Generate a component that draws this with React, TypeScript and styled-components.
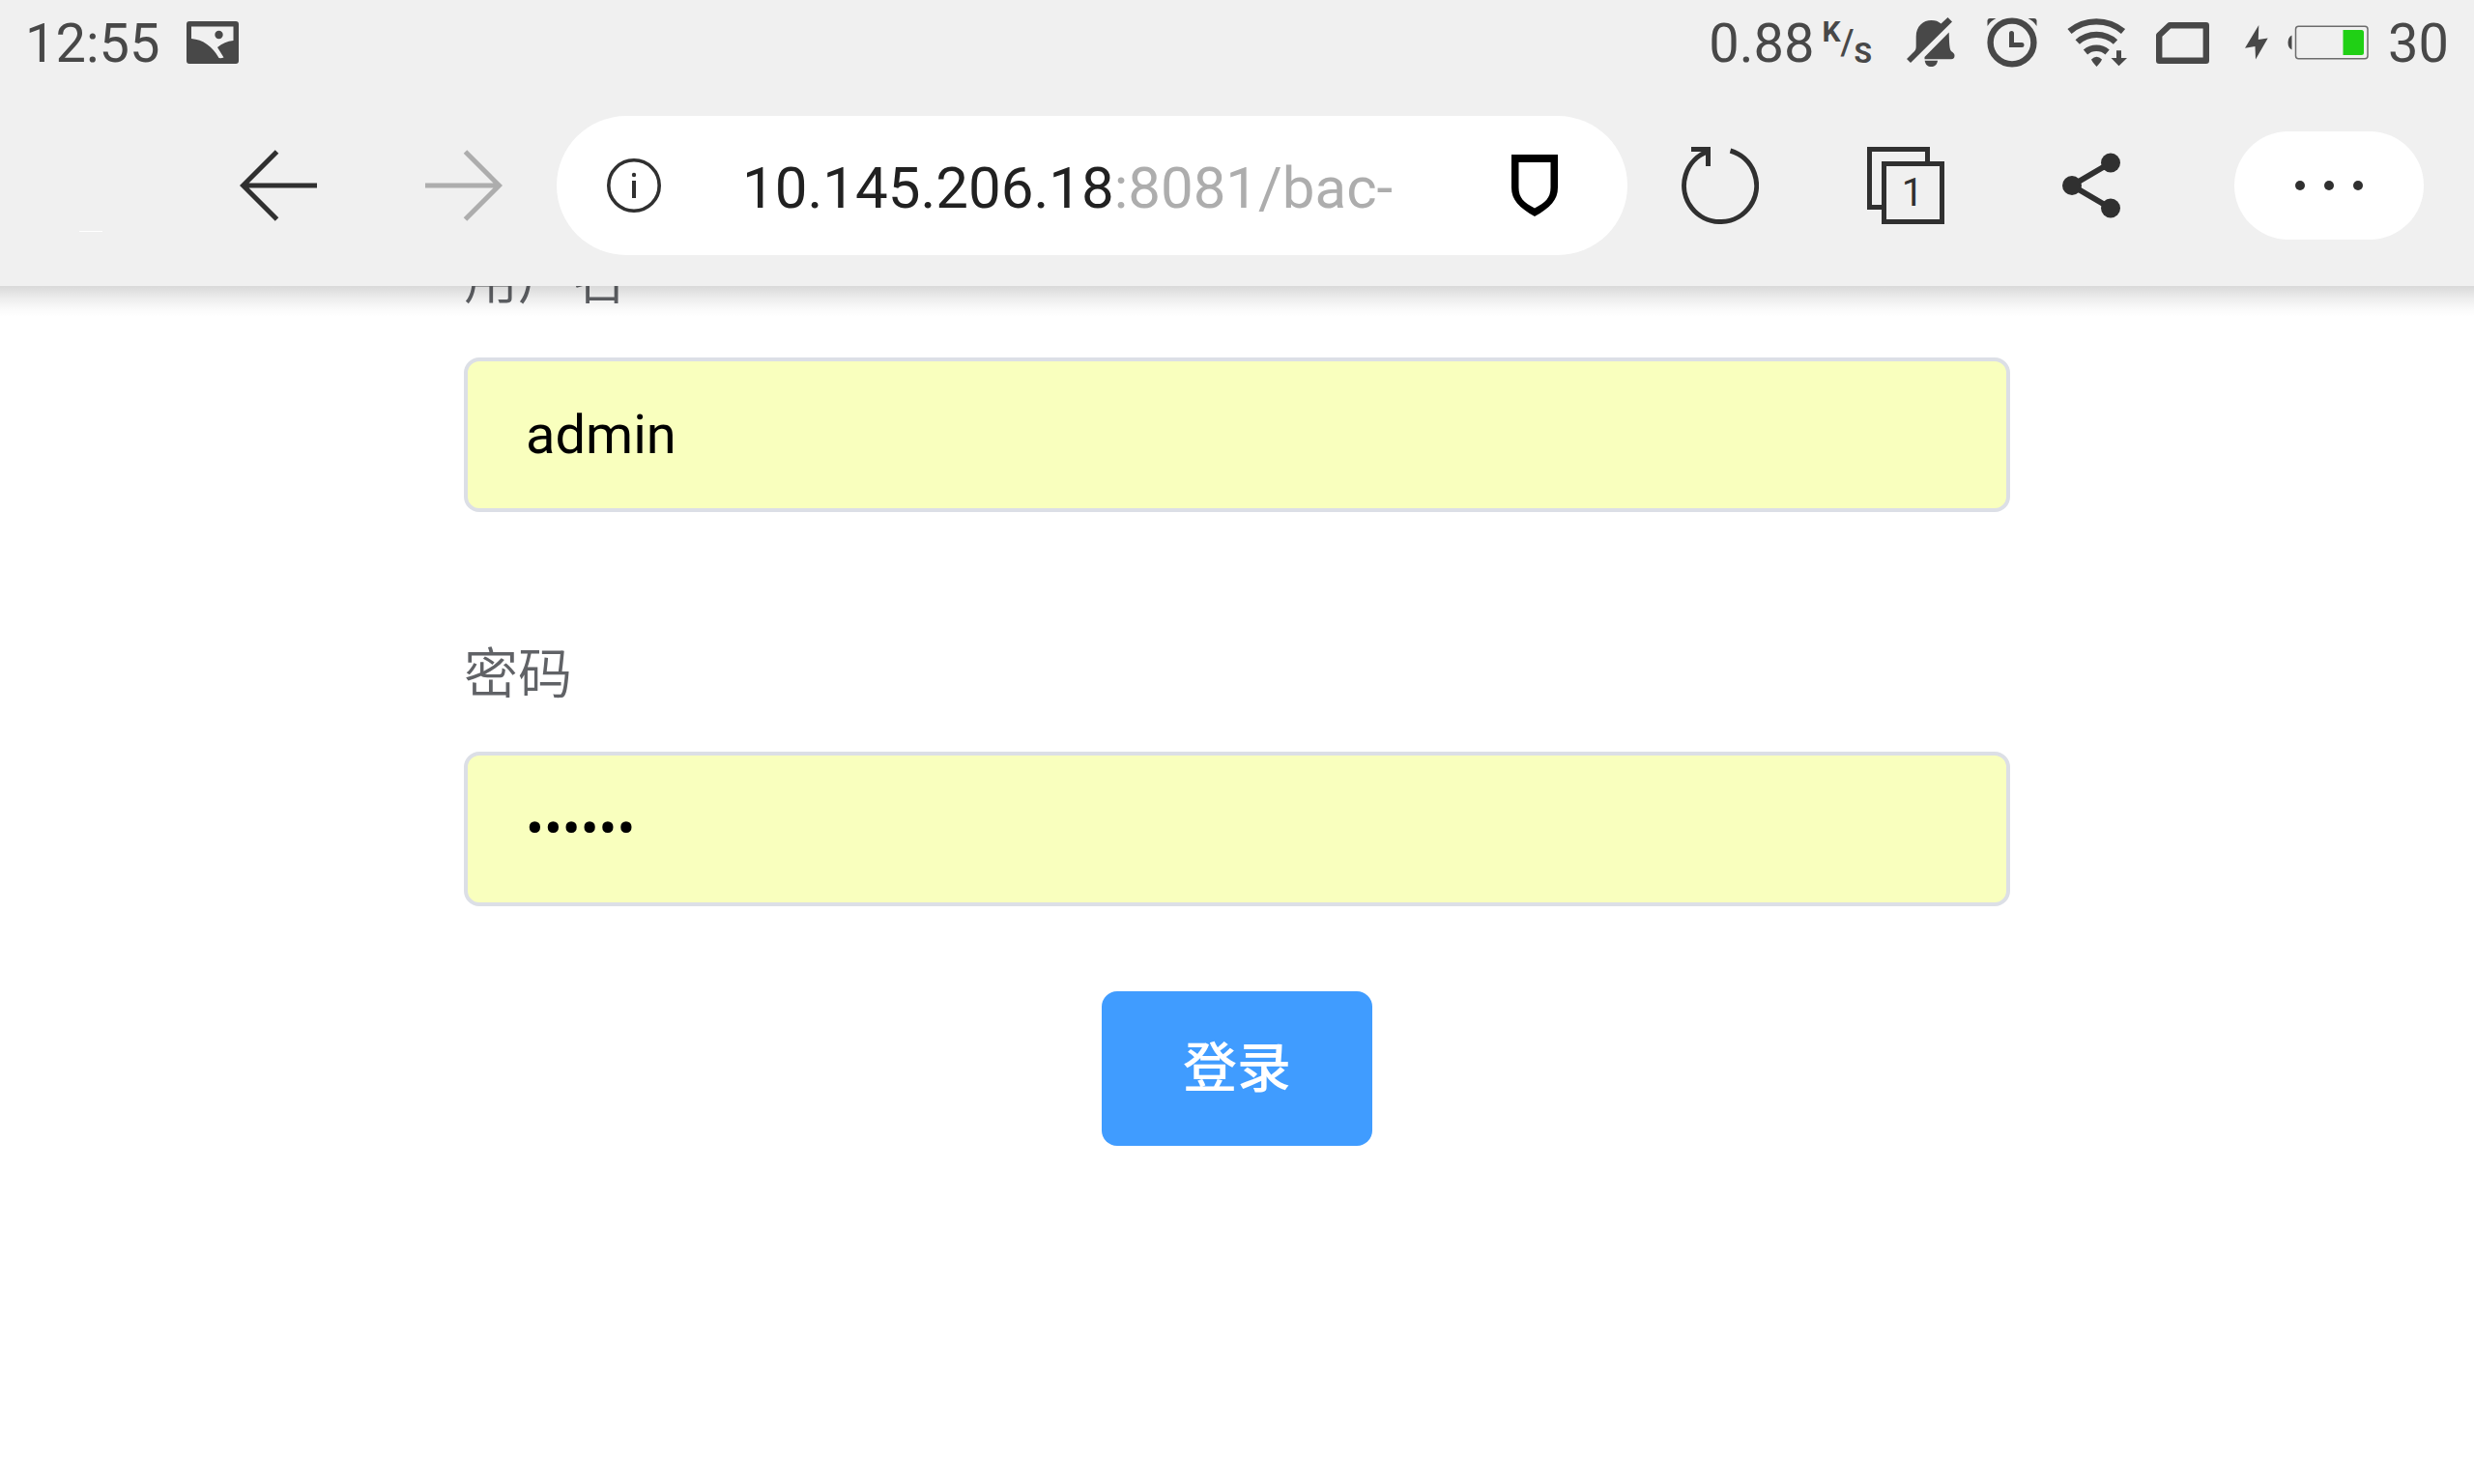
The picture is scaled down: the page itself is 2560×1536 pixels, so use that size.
import React from "react";
import styled, { createGlobalStyle } from "styled-components";

const GlobalStyle = createGlobalStyle`
  *, *::before, *::after { box-sizing: border-box; }
  body {
    margin: 0;
    background: #ffffff;
    font-family: Roboto, "Noto Sans CJK SC", sans-serif;
    font-size: 56px;
  }
  button, input { font: inherit; }
`;

const Header = styled.header`
  position: sticky;
  top: 0;
  z-index: 1;
  background: #f0f0f0;

  &::after {
    content: "";
    position: absolute;
    top: 100%;
    left: 0;
    right: 0;
    height: 32px;
    pointer-events: none;
    background: linear-gradient(
      rgba(0, 0, 0, 0.15),
      rgba(0, 0, 0, 0.07) 40%,
      rgba(0, 0, 0, 0.02) 75%,
      transparent
    );
  }
`;

const StatusBar = styled.div`
  display: flex;
  align-items: center;
  justify-content: space-between;
  height: 88px;
  padding: 0 26px;
  color: #484848;
  line-height: 64px;
`;

const StatusGroup = styled.div<{ $gap: number }>`
  display: flex;
  align-items: center;
  gap: ${(p) => p.$gap}px;
`;

const StatusText = styled.span`
  padding-top: 2px;
`;

const Rate = styled.span`
  display: flex;
  height: 50px;
  font-size: 30px;
  font-weight: 700;
  line-height: 28px;
`;

const RateSlash = styled.span`
  align-self: center;
  font-size: 36px;
  font-weight: 500;
`;

const RateUnit = styled.span`
  align-self: flex-end;
`;

const Toolbar = styled.nav`
  display: flex;
  align-items: center;
  height: 208px;
`;

const ToolSlot = styled.div`
  flex: none;
  display: flex;
  width: 192px;
`;

const ToolButton = styled.button<{ $muted?: boolean }>`
  flex: none;
  display: flex;
  align-items: center;
  justify-content: center;
  width: 192px;
  height: 144px;
  padding: 0;
  border: 0;
  background: none;
  color: ${(p) => (p.$muted ? "#adadad" : "#303030")};
`;

const AddressBar = styled.div`
  flex: 1;
  min-width: 0;
  display: flex;
  align-items: center;
  height: 144px;
  border-radius: 72px;
  background: #ffffff;
`;

const InfoButton = styled(ToolButton)`
  width: 160px;
`;

const Address = styled.button`
  flex: 1;
  min-width: 0;
  height: 144px;
  padding: 4px 0 0 32px;
  border: 0;
  overflow: hidden;
  background: none;
  color: #212121;
  font-size: 60px;
  text-align: left;
  white-space: nowrap;
`;

const AddressRest = styled.span`
  color: #adadad;
`;

const MoreButton = styled(ToolButton)`
  width: 196px;
  height: 112px;
  margin: 0 52px;
  border-radius: 56px;
  background: #ffffff;
`;

const LoginForm = styled.form`
  display: flex;
  flex-direction: column;
  gap: 88px;
  margin: -86px 480px 0;
`;

const Field = styled.div`
  display: flex;
  flex-direction: column;
`;

const FieldLabel = styled.label`
  color: #606266;
  line-height: 160px;
  font-weight: 350;
`;

const FieldInput = styled.input`
  width: 100%;
  height: 160px;
  padding: 0 60px;
  border: 4px solid #dcdfe6;
  border-radius: 16px;
  outline: 0;
  background: #f9ffbe;
  color: #000000;
`;

const SubmitButton = styled.button`
  align-self: center;
  padding: 0 84px;
  border: 0;
  border-radius: 16px;
  background: #409cff;
  color: #ffffff;
  font-weight: 500;
  line-height: 160px;
`;

const ImageIcon = () => (
  <svg width="54" height="44" viewBox="0 0 54 44" fill="currentColor" aria-hidden="true">
    <path
      fillRule="evenodd"
      d="M3 0H51Q54 0 54 3V41Q54 44 51 44H3Q0 44 0 41V3Q0 0 3 0ZM5 5.5V18C17 19 27 26 33.5 38Q36 38.500 38.500 37.500L32 27C37 23 42 20.500 48.500 20V5.500Z"
    />
    <circle cx="33.500" cy="14" r="4.200" />
  </svg>
);

const MutedBellIcon = () => (
  <svg width="60" height="52" viewBox="-8 0 60 52" fill="currentColor" aria-hidden="true">
    <path d="M0 43L6 37C9 34.500 9.700 33 9.700 30V20C9.700 9 17 3 25.500 3C30 3 32.500 4 35.500 6.500L42.500 0L47 4.500L4 47Z" />
    <path d="M43.700 15.500C44 24 44 29 45 33C45.500 36 49.500 36 49.500 39.500Q49.500 43.300 46 43.300H18.500V41Z" />
    <path d="M18.700 44.700H32C31.500 49 28.500 51 25.300 51C22 51 19.200 49 18.700 44.700Z" />
  </svg>
);

const AlarmIcon = () => (
  <svg width="56" height="54" viewBox="-3 0 56 54" fill="none" stroke="currentColor" aria-hidden="true">
    <circle cx="26" cy="27" r="22.400" strokeWidth="6.400" />
    <path d="M25.500 17.500V29.500H36" strokeWidth="5" strokeLinecap="round" />
    <path d="M0.500 10V4Q1 2 3 2H9.500Q4 4.500 0.500 10ZM51.500 10V4Q51 2 49 2H42.500Q48 4.500 51.500 10Z" fill="currentColor" stroke="none" />
  </svg>
);

const WifiIcon = () => (
  <svg width="64" height="52" viewBox="-2 0 64 52" fill="none" stroke="currentColor" strokeWidth="6.400" aria-hidden="true">
    <path d="M2.500 14.500A43 43 0 0 1 58 14.500" />
    <path d="M10.700 25.500A29 29 0 0 1 50 25.500" />
    <path d="M19 36A17 17 0 0 1 41.600 36" />
    <path d="M25 43.500Q30.500 38 36 43.500Q35 46 30.500 51Q26 46 25 43.500Z" fill="currentColor" stroke="none" />
    <path d="M51 34.300H56V42H62L53.500 50.300L45.500 42H51Z" fill="currentColor" stroke="none" />
  </svg>
);

const SimIcon = () => (
  <svg width="66" height="43" viewBox="-2 0 66 43" fill="none" stroke="currentColor" strokeWidth="6.400" strokeLinejoin="round" aria-hidden="true">
    <path d="M14 3.200H51.800V39.800H3.200V13.500Z" />
  </svg>
);

const BoltIcon = () => (
  <svg width="24" height="36" viewBox="0 0 24 36" fill="currentColor" aria-hidden="true">
    <path d="M14.300 0L0 23.700L10.500 22L11 35.500L23.700 13.500L13.800 15Z" />
  </svg>
);

const BatteryIcon = () => (
  <svg width="84" height="36" viewBox="0 0 84 36" fill="none" aria-hidden="true">
    <path d="M4.500 10.500V25.500Q0.500 23.500 0.500 18T4.500 10.500Z" fill="#484848" />
    <rect x="8.500" y="1.200" width="74.500" height="33.600" rx="3" stroke="#6c6c6c" strokeWidth="1.500" />
    <path d="M57.500 5H76.500Q79 5 79 7.500V28.500Q79 31 76.500 31H57.500Z" fill="#20d015" />
  </svg>
);

const BackIcon = () => (
  <svg width="80" height="80" viewBox="0 0 80 80" fill="none" stroke="currentColor" strokeWidth="5" aria-hidden="true">
    <path d="M38.500 5L3.500 40L38.500 75M4 40H80" />
  </svg>
);

const ForwardIcon = () => (
  <svg width="80" height="80" viewBox="0 0 80 80" fill="none" stroke="currentColor" strokeWidth="5" aria-hidden="true">
    <path d="M41.500 5L76.500 40L41.500 75M76 40H0" />
  </svg>
);

const InfoIcon = () => (
  <svg width="56" height="56" viewBox="0 0 56 56" fill="none" stroke="currentColor" aria-hidden="true">
    <circle cx="28" cy="28" r="26.200" strokeWidth="3.600" />
    <path d="M28 23V41" strokeWidth="4" />
    <circle cx="28" cy="17" r="2.200" fill="currentColor" stroke="none" />
  </svg>
);

const ShieldIcon = () => (
  <svg width="48" height="64" viewBox="0 0 48 64" aria-hidden="true">
    <path
      fill="#000000"
      fillRule="evenodd"
      d="M0 0H48V34C48 47 40 55 24 64C8 55 0 47 0 34ZM7.500 8V34C7.500 45 13 49.500 24 55.500C35 49.500 40.500 45 40.500 34V8Z"
    />
  </svg>
);

const ReloadIcon = () => (
  <svg width="80" height="80" viewBox="0 0 80 80" fill="none" stroke="currentColor" strokeWidth="5" aria-hidden="true">
    <path d="M50.500 4A37.500 37.500 0 1 1 27.500 4.700" />
    <path d="M10 2.500H27.500V20" />
  </svg>
);

const TabsIcon = ({ count }: { count: number }) => (
  <svg width="80" height="80" viewBox="0 0 80 80" fill="none" stroke="currentColor" strokeWidth="5">
    <path d="M62.500 15V2.500H2.500V62.500H15" />
    <rect x="17.500" y="17.500" width="60" height="60" />
    <text x="47" y="61" textAnchor="middle" fontSize="40" fill="currentColor" stroke="none">
      {count}
    </text>
  </svg>
);

const ShareIcon = () => (
  <svg width="80" height="80" viewBox="0 0 80 80" fill="currentColor" aria-hidden="true">
    <path d="M60 16.500L20 40L60 63.500" fill="none" stroke="currentColor" strokeWidth="6" />
    <circle cx="20" cy="40" r="10" />
    <circle cx="60" cy="16.500" r="10" />
    <circle cx="60" cy="63.500" r="10" />
  </svg>
);

const MoreIcon = () => (
  <svg width="72" height="12" viewBox="0 0 72 12" fill="currentColor" aria-hidden="true">
    <circle cx="6" cy="6" r="5" />
    <circle cx="36" cy="6" r="5" />
    <circle cx="66" cy="6" r="5" />
  </svg>
);

const HomeGlint = () => (
  <svg width="192" height="208" viewBox="0 0 192 208" aria-hidden="true">
    <path d="M82 151.500H106" stroke="#ffffff" strokeWidth="1" />
  </svg>
);

export default function App() {
  return (
    <>
      <GlobalStyle />
      <Header>
        <StatusBar>
          <StatusGroup $gap={28}>
            <StatusText>12:55</StatusText>
            <ImageIcon />
          </StatusGroup>
          <StatusGroup $gap={28}>
            <StatusGroup $gap={8}>
              <StatusText>0.88</StatusText>
              <Rate>
                <span>K</span>
                <RateSlash>/</RateSlash>
                <RateUnit>S</RateUnit>
              </Rate>
            </StatusGroup>
            <MutedBellIcon />
            <AlarmIcon />
            <WifiIcon />
            <SimIcon />
            <StatusGroup $gap={20}>
              <BoltIcon />
              <BatteryIcon />
              <StatusText>30</StatusText>
            </StatusGroup>
          </StatusGroup>
        </StatusBar>
        <Toolbar>
          <ToolSlot>
            <HomeGlint />
          </ToolSlot>
          <ToolButton type="button" aria-label="后退">
            <BackIcon />
          </ToolButton>
          <ToolButton type="button" aria-label="前进" $muted>
            <ForwardIcon />
          </ToolButton>
          <AddressBar>
            <InfoButton type="button" aria-label="网站信息">
              <InfoIcon />
            </InfoButton>
            <Address type="button">
              10.145.206.18<AddressRest>:8081/bac-</AddressRest>
            </Address>
            <ToolButton type="button" aria-label="安全">
              <ShieldIcon />
            </ToolButton>
          </AddressBar>
          <ToolButton type="button" aria-label="刷新">
            <ReloadIcon />
          </ToolButton>
          <ToolButton type="button" aria-label="标签页">
            <TabsIcon count={1} />
          </ToolButton>
          <ToolButton type="button" aria-label="分享">
            <ShareIcon />
          </ToolButton>
          <MoreButton type="button" aria-label="更多">
            <MoreIcon />
          </MoreButton>
        </Toolbar>
      </Header>
      <main>
        <LoginForm onSubmit={(event) => event.preventDefault()}>
          <Field>
            <FieldLabel htmlFor="username">用户名</FieldLabel>
            <FieldInput id="username" type="text" defaultValue="admin" />
          </Field>
          <Field>
            <FieldLabel htmlFor="password">密码</FieldLabel>
            <FieldInput id="password" type="password" defaultValue="123456" />
          </Field>
          <SubmitButton type="submit">登录</SubmitButton>
        </LoginForm>
      </main>
    </>
  );
}
